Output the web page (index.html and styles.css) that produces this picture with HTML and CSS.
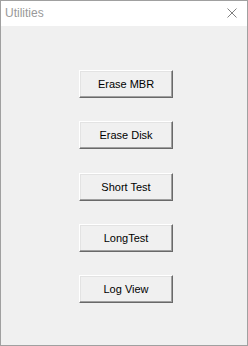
FILE: index.html
```html
<!DOCTYPE html>
<html>
<head>
<meta charset="utf-8">
<link rel="stylesheet" href="styles.css">
</head>
<body>
<div class="window">
  <div class="titlebar">
    <span class="title">Utilities</span>
    <svg class="close" width="10" height="10" viewBox="0 0 10 10"><path d="M0.5 0.5 L9.5 9.5 M9.5 0.5 L0.5 9.5" stroke="#808080" stroke-width="1" fill="none"/></svg>
  </div>
  <div class="content">
    <button class="btn">Erase MBR</button>
    <button class="btn">Erase Disk</button>
    <button class="btn">Short Test</button>
    <button class="btn">LongTest</button>
    <button class="btn">Log View</button>
  </div>
</div>
</body>
</html>
```
FILE: styles.css
```css
html, body {
  margin: 0;
  padding: 0;
}
body {
  width: 248px;
  height: 346px;
  overflow: hidden;
  font-family: "Liberation Sans", Arial, sans-serif;
}
.window {
  box-sizing: border-box;
  width: 248px;
  height: 346px;
  border: 1px solid #a0a0a0;
  background: #f0f0f0;
  display: flex;
  flex-direction: column;
}
.titlebar {
  height: 25px;
  background: #ffffff;
  display: flex;
  align-items: center;
  justify-content: space-between;
  padding: 0 10px 0 4px;
  flex-shrink: 0;
}
.title {
  font-size: 12px;
  color: #999999;
  margin-top: -1px;
}
.close {
  display: block;
  margin-top: -1px;
}
.content {
  display: flex;
  flex-direction: column;
  gap: 23.25px;
  padding: 44px 0 0 78px;
}
.btn {
  box-sizing: border-box;
  width: 94px;
  height: 28px;
  background: #f0f0f0;
  border: 1px solid;
  border-color: #ffffff #696969 #696969 #ffffff;
  box-shadow: inset -1px -1px 0 #a0a0a0, inset 1px 1px 0 #e3e3e3;
  font-family: "Liberation Sans", Arial, sans-serif;
  font-size: 11px;
  color: #000;
  padding: 0;
  margin: 0;
}
```
